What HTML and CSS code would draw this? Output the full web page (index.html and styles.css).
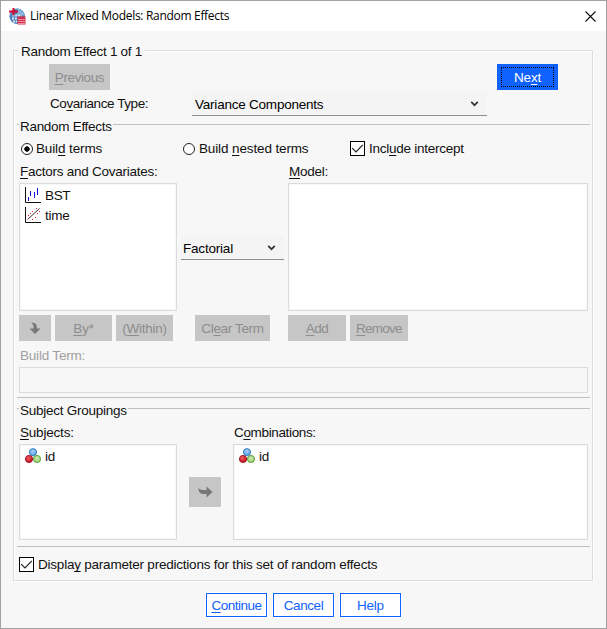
FILE: index.html
```html
<!DOCTYPE html>
<html lang="en">
<head>
<meta charset="utf-8">
<title>Linear Mixed Models: Random Effects</title>
<link rel="stylesheet" href="styles.css">
</head>
<body>
<svg class="defs" width="0" height="0">
  <defs>
    <radialGradient id="blue" cx=".5" cy=".35" r=".6"><stop offset="0" stop-color="#a9d0f5"/><stop offset="1" stop-color="#5a9fe0"/></radialGradient>
    <radialGradient id="red" cx=".4" cy=".35" r=".6"><stop offset="0" stop-color="#f0606a"/><stop offset="1" stop-color="#c4101e"/></radialGradient>
    <radialGradient id="green" cx=".5" cy=".4" r=".6"><stop offset="0" stop-color="#cdeab0"/><stop offset="1" stop-color="#92c86a"/></radialGradient>
    <symbol id="nominal" viewBox="0 0 16 16">
      <circle cx="8" cy="4.2" r="3.6" fill="url(#blue)" stroke="#3079c4" stroke-width=".9"/>
      <circle cx="4" cy="11" r="3.6" fill="url(#red)" stroke="#9c1420" stroke-width=".9"/>
      <circle cx="12" cy="11" r="3.6" fill="url(#green)" stroke="#5b9a35" stroke-width=".9"/>
    </symbol>
    <symbol id="chevron" viewBox="0 0 8 6"><path d="M.7 .9 4 4.2 7.3 .9" fill="none" stroke="#333" stroke-width="1.7"/></symbol>
    <symbol id="check" viewBox="0 0 13 13"><path d="M1.2 6.2 5 10 11.8 2.8" fill="none" stroke="#222" stroke-width="1.2"/></symbol>
  </defs>
</svg>
<div class="window">
  <header class="titlebar">
    <svg class="app-icon" width="17" height="17" viewBox="0 0 17 17">
      <circle cx="8.2" cy="8.2" r="7.8" fill="#4d83bd"/>
      <path d="M8 .5a7.8 7.8 0 0 1 7.6 7H8z" fill="#85b0da"/>
      <path d="M3.5 7.5h9M3 10.5h5M4 13.5h4" stroke="#d5e6f5" stroke-width="1.8" stroke-dasharray="2 .8"/>
      <path d="M4.5 0v7.2M0 3.5h9" stroke="#d20a2e" stroke-width="2"/>
      <path d="M8.5 8.5h8v8h-8z" fill="#d42f4b"/>
      <path d="M9.5 11.5h6.5M9.5 13.5h6.5M9.5 15.5h6.5" stroke="#fbd5db" stroke-width="1" stroke-dasharray="1.2 .8"/>
    </svg>
    <h1>Linear Mixed Models: Random Effects</h1>
    <svg class="close" width="11" height="11" viewBox="0 0 11 11"><path d="M.5 .5 10.5 10.5M10.5 .5 .5 10.5" stroke="#111" stroke-width="1.1"/></svg>
  </header>
  <main class="panel">
    <div class="legend panel-legend"><span class="t-effect">Random Effect 1 of 1</span></div>
    <div class="nav">
      <button class="btn off w61 t-prev"><span><u>P</u>revious</span></button>
      <button class="btn primary w61 t-next"><span>Ne<u>x</u>t</span></button>
    </div>
    <div class="type-row">
      <label class="t-cov">Co<u>v</u>ariance Type:</label>
      <div class="select wide"><span class="t-var">Variance Components</span><svg width="9" height="6"><use href="#chevron"/></svg></div>
    </div>

    <section class="group effects">
      <div class="legend"><span class="t-re">Random Effects</span></div>
      <div class="options">
        <label class="opt"><i class="radio on"></i><span class="t-bt">Buil<u>d</u> terms</span></label>
        <label class="opt nested"><i class="radio"></i><span class="t-bnt">Build <u>n</u>ested terms</span></label>
        <label class="opt"><svg class="box" width="15" height="15"><use href="#check"/></svg><span class="t-ii">Incl<u>u</u>de intercept</span></label>
      </div>
      <div class="terms">
        <div class="field">
          <label class="t-fc"><u>F</u>actors and Covariates:</label>
          <ul class="list">
            <li><svg width="16" height="16" viewBox="0 0 16 16"><path d="M.5 0V15.5H16" fill="none" stroke="#111"/><path d="M3.5 10v4M5.5 4v5M9.5 5v6M12.5 1v7" stroke="#1212e0"/></svg><span class="t-bst">BST</span></li>
            <li><svg width="16" height="16" viewBox="0 0 16 16"><path d="M.5 0V15.5H16" fill="none" stroke="#111"/><path d="M2.5 12.5 14.5 1.5" stroke="#333" stroke-width="1"/><path d="M3 8.5h1M5 6.5h1M7 4.5h1M11 1.5h1M7 12.5h1M10 10.5h1M12 6.5h1M14 4.5h1M3 11.5h1" stroke="#e02020" stroke-width="1"/></svg><span class="t-time">time</span></li>
          </ul>
        </div>
        <div class="select small"><span class="t-fac">Factorial</span><svg width="9" height="6"><use href="#chevron"/></svg></div>
        <div class="field">
          <label class="t-model"><u>M</u>odel:</label>
          <ul class="list"></ul>
        </div>
      </div>
      <div class="actions">
        <button class="btn off arrow"><svg width="12" height="13" viewBox="0 0 12 13"><path d="M2 .5C5 .5 7.8 1.8 7.8 4.5V6.5H11.5L6 12 .5 6.5H4.5V4.5C4.5 2.5 3.5 1.8 2 .5z" fill="#777"/></svg></button>
        <button class="btn off by t-by"><span><u>B</u>y*</span></button>
        <button class="btn off within t-within"><span>(<u>W</u>ithin)</span></button>
        <button class="btn off clear t-clear"><span>Cl<u>e</u>ar Term</span></button>
        <button class="btn off add t-add"><span><u>A</u>dd</span></button>
        <button class="btn off remove t-remove"><span><u>R</u>emove</span></button>
      </div>
      <div class="build">
        <label class="t-build">Build Term:</label>
        <div class="input"></div>
      </div>
    </section>

    <section class="group subjects">
      <div class="legend"><span class="t-sg">Subject Groupings</span></div>
      <div class="pairs">
        <div class="field">
          <label class="t-subj"><u>S</u>ubjects:</label>
          <ul class="list"><li><svg width="16" height="16"><use href="#nominal"/></svg><span class="t-id">id</span></li></ul>
        </div>
        <button class="btn off arrow move"><svg width="15" height="12" viewBox="0 0 15 12"><path d="M.5 1C.8 3.2 2.5 4 5 4H8.5V.5L14.5 6 8.5 11.5V8H5C1.5 8 .2 5 .5 1z" fill="#777"/></svg></button>
        <div class="field">
          <label class="t-comb">C<u>o</u>mbinations:</label>
          <ul class="list"><li><svg width="16" height="16"><use href="#nominal"/></svg><span class="t-id">id</span></li></ul>
        </div>
      </div>
    </section>

    <label class="opt display"><svg class="box" width="15" height="15"><use href="#check"/></svg><span class="t-display">Displa<u>y</u> parameter predictions for this set of random effects</span></label>
  </main>
  <footer>
    <button class="btn outline t-cont"><span><u>C</u>ontinue</span></button>
    <button class="btn outline t-canc"><span>Cancel</span></button>
    <button class="btn outline t-help"><span>Help</span></button>
  </footer>
</div>
</body>
</html>
```
FILE: styles.css
```css
* { box-sizing: border-box; }
body { margin: 0; font: 13.5px/16px "Liberation Sans", sans-serif; letter-spacing: -.25px; color: #111; background: #f7f7f7; }
h1, ul { margin: 0; padding: 0; font-weight: normal; list-style: none; }
svg { display: block; flex: none; }
.defs { position: absolute; }
u { text-underline-offset: 2px; text-decoration-thickness: 1px; text-decoration-skip-ink: none; }
span, label { white-space: nowrap; }

.window { width: 607px; height: 629px; border: 1px solid #a2a2a2; background: #f7f7f7; }
.titlebar { display: flex; align-items: center; height: 30px; padding: 0 10px 0 8px; background: #fff; }
.titlebar h1 { margin-left: 4px; font: 12px/16px "Open Sans", "Noto Sans", sans-serif; letter-spacing: -.31px; color: #000; }
.close { margin-left: auto; }

.panel { width: 580px; height: 531px; margin: 19px 0 0 12px; border: 1px solid #dcdcdc; box-shadow: 1px 1px 0 #fff, inset 1px 1px 0 #fff; }
.legend { width: max-content; height: 16px; margin-top: -8px; background: #f7f7f7; }
.legend span { display: block; padding-top: 1px; }
.panel-legend { margin-left: 4px; padding: 0 3px; }
.nav { display: flex; justify-content: space-between; margin: 5px 34px 0 35px; }

.btn { display: flex; align-items: center; justify-content: center; height: 26px; padding: 0; border: 0; font: inherit; letter-spacing: inherit; white-space: nowrap; }
.btn span { padding-top: 2px; }
.w61 { width: 61px; }
.off { background: #c6c6c6; color: #8d8d8d; }
.primary { padding: 3px 4px; background: #0f62fe; color: #fff; }
.primary span { flex: 1; height: 20px; line-height: 16px; border: 1px dotted #000; }
.outline { width: 61px; height: 24px; border: 1px solid #0f62fe; background: #fff; color: #0f62fe; box-shadow: 0 0 0 1px #fff; }

.type-row { display: flex; align-items: center; height: 24px; margin: 2px 0 0 36px; }
.type-row label { width: 142px; }
.select { display: flex; align-items: center; justify-content: space-between; height: 24px; border-bottom: 1px solid #8d8d8d; background: #f4f4f4; color: #000; }
.select span { padding-top: 2px; }
.wide { width: 295px; padding: 1px 8px 0 3px; }
.small { width: 103px; padding: 1px 8px 0 2px; margin-top: 73px; }

.group { width: 573px; margin-left: 3px; border-top: 1px solid #bfbfbf; }
.group .legend { margin-left: 2px; padding: 0 1px; }
.group .legend span { padding-top: 2px; }
.effects { height: 274px; margin-top: 8px; border-bottom: 1px solid #bfbfbf; }
.subjects { height: 139px; margin-top: 10px; border-bottom: 1px solid #bfbfbf; }

.options { display: grid; grid-template-columns: 162px 167px auto; height: 16px; margin: 7px 0 0 4px; }
.opt { display: flex; align-items: center; }
.opt span { padding-top: 1px; }
.radio { width: 12px; height: 12px; margin-right: 3px; border: 1px solid #222; border-radius: 50%; background: #fff; }
.radio.on { background: radial-gradient(circle, #000 0 2.4px, #fff 3px); }
.nested .radio { margin-right: 4px; }
.box { margin-right: 4px; border: 1px solid #000; background: #fff; overflow: hidden; }

.field label { display: block; height: 20px; padding: 1px 0 0 1px; }
.list { border: 1px solid #dcdcdc; background: #fff; box-shadow: inset -1px -1px 0 #f7f7f7, inset 1px 1px 0 #f7f7f7; }
.list li { display: flex; align-items: center; gap: 4px; height: 20px; padding-left: 5px; }
.list span { padding-top: 1px; }
.terms { display: grid; grid-template-columns: 158px 103px 300px; column-gap: 4px; margin: 7px 0 0 2px; }
.terms .list { height: 128px; padding-top: 1px; }
.actions { display: flex; margin: 4px 0 0 2px; }
.arrow { width: 32px; }
.by, .within { width: 57px; }
.by { margin: 0 4px; }
.clear { width: 75px; margin: 0 18px 0 22px; }
.add, .remove { width: 58px; }
.remove { margin-left: 4px; }
.build { margin: 7px 0 0 2px; color: #a0a0a0; }
.build label { display: block; height: 19px; padding-left: 1px; }
.input { width: 569px; height: 26px; border: 1px solid #dcdcdc; }

.pairs { display: grid; grid-template-columns: 158px 32px 355px; column-gap: 12px; margin: 8px 0 0 2px; }
.pairs .field label { height: 19px; padding-top: 0; }
.pairs .list { height: 96px; padding-top: 1px; }
.move { height: 30px; margin-top: 52px; }
.display { width: max-content; height: 16px; margin: 9px 0 0 5px; }
footer { display: flex; gap: 6px; margin: 12px 0 0 205px; }

/* Tracking per caption */
.t-effect { letter-spacing: -.28px; }
.t-prev, .t-canc { letter-spacing: -.4px; }
.t-cov { letter-spacing: -.42px; }
.t-var { letter-spacing: -.22px; }
.t-bt, .t-bnt { letter-spacing: -.13px; }
.t-re { letter-spacing: -.3px; }
.t-fac, .t-subj, .t-build { letter-spacing: -.2px; }
.t-display { letter-spacing: -.22px; }
.t-clear, .t-comb, .t-bst { letter-spacing: -.35px; }
.t-remove { letter-spacing: -.75px; }
.t-add, .t-cont { letter-spacing: -.48px; }
```
